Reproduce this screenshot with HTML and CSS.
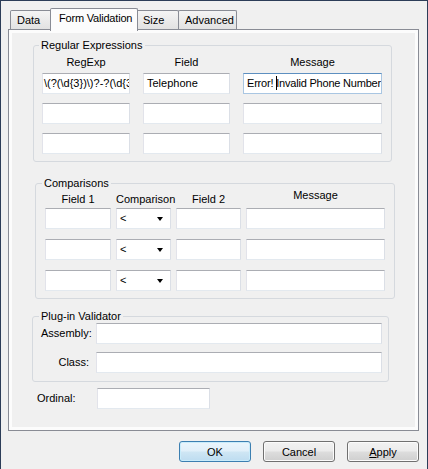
FILE: index.html
```html
<!DOCTYPE html>
<html lang="en">
<head>
  <meta charset="UTF-8">
  <title>Form Validation</title>
  <link rel="stylesheet" href="styles.css">
</head>
<body>
  <div class="window">
    <div class="tab-strip">
      <div class="tab tab-data">Data</div>
      <div class="tab tab-active">Form Validation</div>
      <div class="tab tab-size">Size</div>
      <div class="tab tab-adv">Advanced</div>
    </div>

    <div class="tab-panel">
      <div class="page">

        <fieldset class="group group-regex">
          <legend>Regular Expressions</legend>
          <div class="heads regex-cols">
            <div>RegExp</div>
            <div>Field</div>
            <div>Message</div>
          </div>
          <div class="rows regex-cols">
            <div class="tb tb-scrolled">\(?(\d{3})\)?-?(\d{3})-?(\d{4})</div>
            <div class="tb">Telephone</div>
            <div class="tb tb-focus">Error! <span class="caret"></span>Invalid Phone Number</div>
            <div class="tb"></div>
            <div class="tb"></div>
            <div class="tb"></div>
            <div class="tb"></div>
            <div class="tb"></div>
            <div class="tb"></div>
          </div>
        </fieldset>

        <fieldset class="group group-cmp">
          <legend>Comparisons</legend>
          <div class="heads cmp-cols">
            <div>Field 1</div>
            <div>Comparison</div>
            <div>Field 2</div>
            <div class="head-up">Message</div>
          </div>
          <div class="rows cmp-cols" id="cmpRows"></div>
        </fieldset>

        <fieldset class="group group-plugin">
          <legend>Plug-in Validator</legend>
          <div class="form-grid">
            <label>Assembly:</label>
            <div class="tb"></div>
            <label>Class:</label>
            <div class="tb"></div>
          </div>
        </fieldset>

        <div class="ordinal">
          <label>Ordinal:</label>
          <div class="tb tb-ordinal"></div>
        </div>

      </div>
    </div>

    <div class="buttons">
      <button class="btn btn-default">OK</button>
      <button class="btn">Cancel</button>
      <button class="btn"><u>A</u>pply</button>
    </div>
  </div>

  <script>
    const cmpRows = document.getElementById('cmpRows');
    for (let i = 0; i < 3; i++) {
      cmpRows.innerHTML += `
        <div class="tb"></div>
        <div class="tb combo"><span>&lt;</span><span class="arrow"></span></div>
        <div class="tb"></div>
        <div class="tb"></div>
      `;
    }
  </script>
</body>
</html>
```

FILE: styles.css
```css
body {
  margin: 0;
  font-family: "Liberation Sans", Arial, sans-serif;
  font-size: 11px;
  color: #000;
  background-color: #f0f0f0;
}
.window {
  box-sizing: border-box;
  width: 428px;
  height: 469px;
  border: 1px solid #2c3d58;
  border-bottom: none;
  padding: 7px 0 0 7px;
  background-color: #f0f0f0;
}

/* tabs */
.tab-strip {
  display: flex;
  align-items: flex-end;
  height: 21px;
  padding-left: 2px;
}
.tab {
  box-sizing: border-box;
  height: 19px;
  line-height: 18px;
  padding-left: 6px;
  border: 1px solid #898c95;
  border-bottom: none;
  border-radius: 2px 2px 0 0;
  background: linear-gradient(#f4f4f4, #e2e2e2);
  white-space: nowrap;
}
.tab-data {
  width: 42px;
}
.tab-active {
  position: relative;
  z-index: 1;
  width: 88px;
  height: 23px;
  margin: 0 -2px -2px;
  padding-left: 8px;
  line-height: 18px;
  letter-spacing: -0.2px;
  background: #fcfcfc;
}
.tab-size {
  width: 43px;
}
.tab-adv {
  width: 59px;
  margin-left: -1px;
}
.tab-panel {
  box-sizing: border-box;
  width: 411px;
  height: 402px;
  border: 1px solid #898c95;
  padding: 3px;
  background-color: #fcfcfc;
}
.page {
  height: 100%;
  background-color: #f0f0f0;
  overflow: hidden;
}

/* group boxes */
.group {
  box-sizing: border-box;
  min-width: 0;
  margin: 0;
  border: 1px solid #d5d9de;
  border-radius: 3px;
}
.group legend {
  padding: 0 2px;
  line-height: 12px;
}
.group-regex {
  width: 359px;
  margin: 6px 0 0 21px;
  padding: 4px 8px 7px;
}
.group-regex legend {
  margin-left: -3px;
}
.group-cmp {
  width: 360px;
  margin: 15px 0 0 23px;
  padding: 3px 9px 7px;
}
.group-cmp legend {
  margin-left: -3px;
}
.group-plugin {
  width: 357px;
  margin: 11px 0 0 20px;
  padding: 1px 5px 8px 8px;
}
.group-plugin legend {
  margin-left: -2px;
}

.heads {
  display: grid;
  line-height: 14px;
  text-align: center;
}
.rows {
  display: grid;
}
.regex-cols {
  grid-template-columns: 88px 87px 139px;
  column-gap: 13px;
}
.group-regex .heads {
  margin-bottom: 4px;
}
.group-regex .rows {
  row-gap: 9px;
}
.cmp-cols {
  grid-template-columns: 66px 55px 65px 139px;
  column-gap: 5px;
}
.group-cmp .heads {
  margin-bottom: 2px;
}
.group-cmp .rows {
  row-gap: 10px;
}
.head-up {
  margin-top: -4px;
}

/* text boxes */
.tb {
  box-sizing: border-box;
  height: 21px;
  padding: 0 3px;
  line-height: 19px;
  background-color: #fff;
  border: 1px solid #e3e9ef;
  border-top-color: #abadb3;
  border-left-color: #e2e3ea;
  border-right-color: #dbdfe6;
  white-space: nowrap;
  overflow: hidden;
  text-overflow: clip;
}
.tb-scrolled {
  padding-left: 1px;
}
.tb-focus {
  padding-left: 3px;
  letter-spacing: -0.2px;
  border-color: #a9c6e2;
  border-top-color: #5d8fc0;
}
.caret {
  display: inline-block;
  width: 1px;
  height: 14px;
  margin-right: -1px;
  vertical-align: -3px;
  background-color: #000;
}
.combo {
  display: flex;
  align-items: center;
  justify-content: space-between;
  padding: 0 7px 0 3px;
}
.arrow {
  width: 0;
  height: 0;
  border-left: 3px solid transparent;
  border-right: 3px solid transparent;
  border-top: 4px solid #000;
}

.form-grid {
  display: grid;
  grid-template-columns: 48px 286px;
  column-gap: 7px;
  row-gap: 8px;
}
.form-grid label {
  line-height: 21px;
  text-align: right;
}
.ordinal {
  display: flex;
  margin: 6px 0 0 25px;
}
.ordinal label {
  width: 60px;
  line-height: 21px;
}
.tb-ordinal {
  width: 113px;
}

/* buttons */
.buttons {
  display: flex;
  justify-content: flex-end;
  gap: 12px;
  margin-top: 10px;
  padding-right: 8px;
}
.btn {
  box-sizing: border-box;
  width: 72px;
  height: 21px;
  padding: 0;
  font: inherit;
  color: #000;
  border: 1px solid #707070;
  border-radius: 3px;
  background: linear-gradient(#f2f2f2 0%, #ebebeb 48%, #dddddd 52%, #cfcfcf 100%);
  box-shadow: inset 0 0 0 1px #fbfbfb;
}
.btn-default {
  border-color: #3c7fb1;
  background: linear-gradient(#eaf5fc 0%, #e0eff9 48%, #cfe6f4 52%, #bddcf0 100%);
  box-shadow: inset 0 0 0 1px #c9ecfb;
}
```
